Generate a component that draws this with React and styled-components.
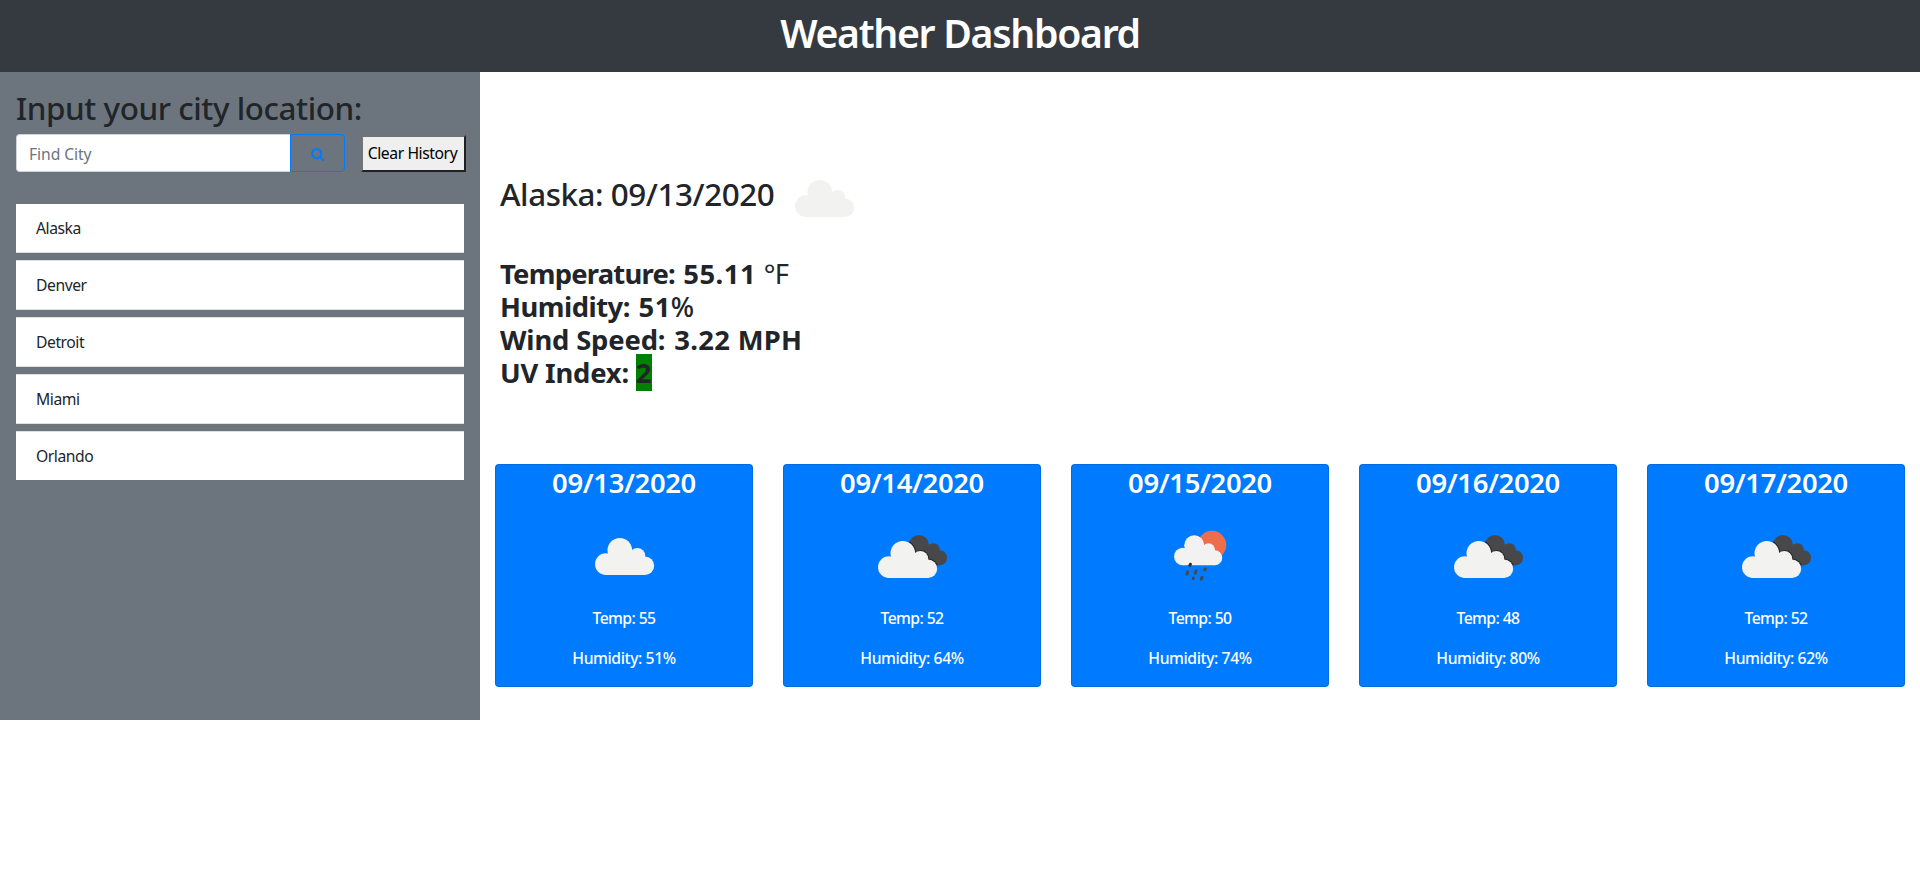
import React from 'react';
import styled, { createGlobalStyle } from 'styled-components';

const GlobalStyle = createGlobalStyle`
  * { box-sizing: border-box; }
  body {
    margin: 0;
    background: #fff;
    color: #212529;
    font-family: "Noto Sans", "Open Sans", sans-serif;
    font-size: 15.7px;
    line-height: 24px;
  }
`;

const Header = styled.header`
  height: 72px;
  padding-top: 9px;
  background: #343a40;
  text-align: center;
`;

const Title = styled.h1`
  margin: 0;
  color: #fff;
  font-size: 39.2px;
  font-weight: 600;
  line-height: 48px;
  letter-spacing: -1.3px;
`;

const Layout = styled.div`
  display: grid;
  grid-template-columns: 480px 1fr;
`;

const Sidebar = styled.aside`
  height: 648px;
  padding: 17px 14px 0 16px;
  background: #6c757d;
`;

const SidebarTitle = styled.h2`
  margin: 0 0 7px;
  font-size: 31.4px;
  font-weight: 500;
  line-height: 38px;
  letter-spacing: -0.43px;
  white-space: nowrap;
`;

const SearchRow = styled.div`
  display: flex;
  align-items: flex-end;
  height: 38px;
`;

const CityInput = styled.input`
  width: 274px;
  height: 38px;
  padding: 1px 12px 0;
  border: 1px solid #ced4da;
  border-right: 0;
  border-radius: 4px 0 0 4px;
  background: #fff;
  font: inherit;
  letter-spacing: -0.08px;
  &::placeholder { color: #6c757d; opacity: 1; }
`;

const SearchButton = styled.button`
  display: flex;
  align-items: center;
  justify-content: center;
  width: 55px;
  height: 38px;
  padding: 2px 0 0;
  border: 1px solid #007bff;
  border-radius: 0 4px 4px 0;
  background: transparent;
  color: #007bff;
`;

const ClearButton = styled.button`
  width: 105px;
  height: 37px;
  margin-left: 16px;
  flex: none;
  padding: 0 2px 2px 0;
  border: 2px solid;
  border-color: #767373 #212121 #212121 #767373;
  background: #efefef;
  color: #000;
  font: inherit;
  line-height: 24px;
  letter-spacing: -0.42px;
  white-space: nowrap;
`;

const CityList = styled.ul`
  display: flex;
  flex-direction: column;
  gap: 7px;
  width: 448px;
  margin: 32px 0 0;
  padding: 0;
  list-style: none;
`;

const City = styled.li`
  padding: 12px 20px;
  border: solid #dfdfdf;
  border-width: 1px 0;
  background: #fff;
  letter-spacing: -0.45px;
  &:first-child { border-top: 0; }
  &:last-child { border-bottom: 0; }
`;

const Main = styled.main`
  padding: 77px 15px 0;
`;

const Current = styled.section`
  padding-left: 5px;
`;

const CurrentHeading = styled.div`
  display: flex;
  height: 100px;
`;

const CurrentTitle = styled.h2`
  width: 274px;
  margin: 0;
  padding-top: 26px;
  font-size: 31.4px;
  font-weight: 500;
  line-height: 38px;
  letter-spacing: -0.45px;
  white-space: nowrap;
`;

const Readings = styled.div`
  padding-top: 8px;
`;

const Reading = styled.div`
  font-size: 27.4px;
  font-weight: 700;
  line-height: 33px;
  letter-spacing: ${(p) => p.$track || 0}px;
  white-space: nowrap;
`;

const Value = styled.span`
  margin-left: 2px;
  letter-spacing: ${(p) => p.$track ?? 0.5}px;
`;

const Unit = styled.span`
  font-weight: ${(p) => p.$weight || 400};
  letter-spacing: -0.8px;
`;

const UvBadge = styled.span`
  background: green;
  letter-spacing: 0.3px;
`;

const Forecast = styled.section`
  display: grid;
  grid-template-columns: repeat(5, 258px);
  column-gap: 30px;
  margin-top: 75px;
`;

const Card = styled.article`
  display: flex;
  flex-direction: column;
  align-items: center;
  height: 223px;
  border: 1px solid rgba(0, 0, 0, 0.125);
  border-radius: 4px;
  background: #007bff;
  color: #fff;
`;

const CardDate = styled.h3`
  margin: 0 0 6px;
  font-size: 27.4px;
  font-weight: 600;
  line-height: 36px;
  letter-spacing: -0.33px;
`;

const CardLine = styled.p`
  margin: ${(p) => (p.$first ? '-1px 0 16px' : 0)};
  font-weight: 500;
  letter-spacing: ${(p) => (p.$first ? -0.6 : -0.4)}px;
`;

const Icon = styled.svg`
  display: block;
  flex: none;
`;

const CloudShape = ({ fill, ...rest }) => (
  <g fill={fill} {...rest}>
    <circle cx="10.8" cy="26.1" r="10.8" />
    <circle cx="24.8" cy="12.3" r="12.3" />
    <circle cx="42.3" cy="18" r="8" />
    <circle cx="50" cy="27.7" r="9.2" />
    <path d="M10.8 36.9V17L24 14l18 3 8 11v8.9z" />
  </g>
);

function WeatherIcon({ kind }) {
  return (
    <Icon width="100" height="100" viewBox="0 0 100 100">
      {kind === 'cloud' && <CloudShape fill="#f2f2f0" transform="translate(21 31)" />}
      {kind === 'broken' && (
        <>
          <defs>
            <clipPath id="darkCloud">
              <circle cx="56.3" cy="38" r="10" />
              <circle cx="70.8" cy="42.8" r="6.5" />
              <circle cx="78" cy="51.5" r="7.5" />
              <rect x="50" y="39" width="22" height="20" />
            </clipPath>
          </defs>
          <CloudShape fill="#48484a" transform="translate(36.6 28) scale(.82)" />
          <g clipPath="url(#darkCloud)">
            <CloudShape fill="#242426" transform="translate(16.9 33.3)" />
          </g>
          <CloudShape fill="#f2f2f0" transform="translate(16 34)" />
        </>
      )}
      {kind === 'rain' && (
        <>
          <circle cx="62" cy="38" r="14.3" fill="#ec6e4c" />
          <CloudShape fill="#f2f2f2" transform="translate(24 28.2) scale(.815)" />
          <g stroke="#48484a" strokeWidth="3" strokeLinecap="round">
            <path d="M40.4 57.2l-.5 1.1" stroke="#2c2c2e" />
            <path d="M37.7 64.9l-.8 2.2M46.1 63.9l-.9 2.3M55.3 62.1l-.4.8M43.5 71.1l-.3.5M52.1 70.3l-.8 2" />
          </g>
        </>
      )}
    </Icon>
  );
}

const cities = ['Alaska', 'Denver', 'Detroit', 'Miami', 'Orlando'];

const days = [
  { date: '09/13/2020', icon: 'cloud', temp: 55, humidity: 51 },
  { date: '09/14/2020', icon: 'broken', temp: 52, humidity: 64 },
  { date: '09/15/2020', icon: 'rain', temp: 50, humidity: 74 },
  { date: '09/16/2020', icon: 'broken', temp: 48, humidity: 80 },
  { date: '09/17/2020', icon: 'broken', temp: 52, humidity: 62 },
];

export default function App() {
  return (
    <>
      <GlobalStyle />
      <Header>
        <Title>Weather Dashboard</Title>
      </Header>
      <Layout>
        <Sidebar>
          <SidebarTitle>Input your city location:</SidebarTitle>
          <SearchRow>
            <CityInput placeholder="Find City" />
            <SearchButton aria-label="Search">
              <Icon width="13.3" height="14.3" viewBox="0 0 1664 1792" fill="currentColor">
                <path d="M1152 832q0-185-131.5-316.5T704 384 387.5 515.5 256 832t131.5 316.5T704 1280t316.5-131.5T1152 832zm512 832q0 52-38 90t-90 38q-54 0-90-38l-343-342q-179 124-399 124-143 0-273.5-55.5t-225-150-150-225T0 832t55.5-273.5 150-225 225-150T704 128t273.5 55.5 225 150 150 225T1408 832q0 220-124 399l343 343q37 37 37 90z" />
              </Icon>
            </SearchButton>
            <ClearButton>Clear History</ClearButton>
          </SearchRow>
          <CityList>
            {cities.map((city) => (
              <City key={city}>{city}</City>
            ))}
          </CityList>
        </Sidebar>
        <Main>
          <Current>
            <CurrentHeading>
              <CurrentTitle>Alaska: 09/13/2020</CurrentTitle>
              <WeatherIcon kind="cloud" />
            </CurrentHeading>
            <Readings>
              <Reading $track={-0.77}>
                Temperature: <Value>55.11 </Value>
                <Unit>°F</Unit>
              </Reading>
              <Reading $track={-0.5}>
                Humidity: <Value>51</Value>
                <Unit $weight={500}>%</Unit>
              </Reading>
              <Reading $track={-0.15}>
                Wind Speed: <Value $track={0.3}>3.22 MPH</Value>
              </Reading>
              <Reading $track={-0.2}>
                UV Index: <UvBadge>2</UvBadge>
              </Reading>
            </Readings>
          </Current>
          <Forecast>
            {days.map((day) => (
              <Card key={day.date}>
                <CardDate>{day.date}</CardDate>
                <WeatherIcon kind={day.icon} />
                <CardLine $first>Temp: {day.temp}</CardLine>
                <CardLine>Humidity: {day.humidity}%</CardLine>
              </Card>
            ))}
          </Forecast>
        </Main>
      </Layout>
    </>
  );
}
